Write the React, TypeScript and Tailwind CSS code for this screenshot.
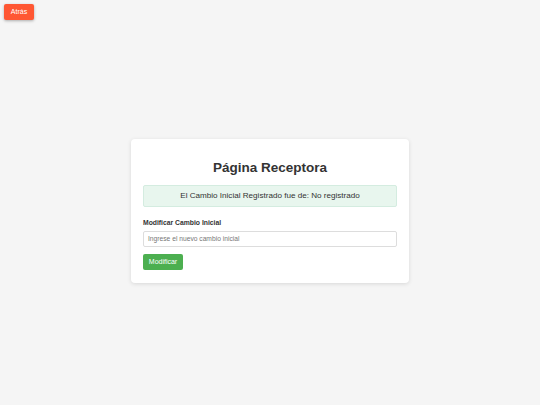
export default function App() {
  return (
    <div className="h-[405px] w-[540px] bg-[#f5f5f5] flex flex-col" style={{ fontFamily: '"Liberation Sans", Arial, sans-serif' }}>
      <div className="pt-[4px] pl-[4px] h-[17px]">
        <button className="h-[16px] w-[30px] rounded-[2px] bg-[#ff5733] text-white text-[7px] shadow-[0_1px_3px_rgba(0,0,0,0.3)] flex items-center justify-center">Atrás</button>
      </div>
      <div className="flex-1 flex items-center justify-center">
        <div className="w-[278px] bg-white rounded-[4px] shadow-[0_1px_4px_rgba(0,0,0,0.12)] px-[12px] pt-[21px] pb-[13px]">
          <h1 className="text-center text-[13.5px] font-bold text-[#333] leading-[16px]">Página Receptora</h1>
          <div className="mt-[9px] h-[22px] rounded-[2px] bg-[#e8f6ee] border border-[#d4ece0] flex items-center justify-center text-[8.1px] text-[#333]">El Cambio Inicial Registrado fue de: No registrado</div>
          <div className="mt-[12px] text-[6.8px] font-bold text-[#333] leading-[8px]">Modificar Cambio Inicial</div>
          <div className="mt-[4px] h-[16px] border border-[#ddd] rounded-[2px] flex items-center px-[4px] text-[6.7px] text-[#777]">Ingrese el nuevo cambio inicial</div>
          <button className="mt-[7px] h-[16px] w-[40px] rounded-[2px] bg-[#4caf50] text-white text-[7px] flex items-center justify-center">Modificar</button>
        </div>
      </div>
    </div>
  );
}
